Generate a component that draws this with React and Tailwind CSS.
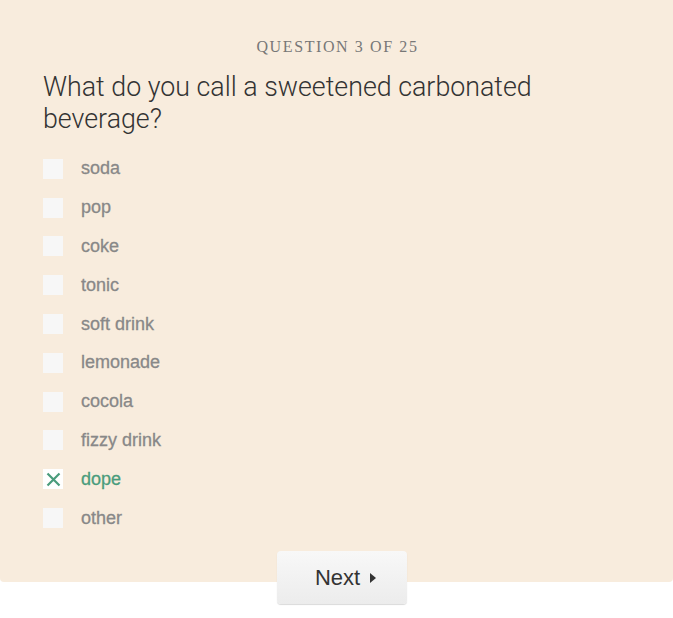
import React from "react";

const options = ["soda","pop","coke","tonic","soft drink","lemonade","cocola","fizzy drink","dope","other"];

export default function App() {
  return (
    <div className="w-[673px] bg-white min-h-[618px]">
      <div className="bg-[#f8ecdd] rounded-b-[4px] px-[43px] pt-[37px] pb-[45px]">
        <div className="text-center text-[16px] leading-[20px] tracking-[1.6px] text-[#777777] pl-[2px]" style={{fontFamily: '"Liberation Serif", serif'}}>
          QUESTION 3 OF 25
        </div>
        <h1 className="mt-[14px] text-[26.8px] leading-[32px] font-light text-[#333333] w-[520px]" style={{fontFamily: 'Roboto, sans-serif'}}>
          What do you call a sweetened carbonated beverage?
        </h1>
        <div className="mt-[14.5px] flex flex-col">
          {options.map((o) => {
            const sel = o === "dope";
            return (
              <div key={o} className="h-[38.8px] flex items-center">
                <div className={`w-[20px] h-[20px] flex items-center justify-center ${sel ? "bg-white" : "bg-[#f7f7f7]"}`}>
                  {sel && (
                    <svg width="15" height="15" viewBox="0 0 15 15">
                      <path d="M1.5 1.5 L13.5 13.5 M13.5 1.5 L1.5 13.5" stroke="#4a9c7c" strokeWidth="2.2" />
                    </svg>
                  )}
                </div>
                <span className={`ml-[18px] text-[18px] [-webkit-text-stroke:0.3px_currentColor] ${sel ? "text-[#4a9c7c]" : "text-[#888888]"}`} style={{fontFamily: '"Liberation Sans", Arial, sans-serif'}}>
                  {o}
                </span>
              </div>
            );
          })}
        </div>
      </div>
      <div className="flex justify-center pl-[10px] -mt-[31px]">
        <button className="w-[130px] h-[53px] rounded-[4px] bg-gradient-to-b from-[#f8f8f8] to-[#ececec] shadow-[0_1px_1px_rgba(0,0,0,0.15)] flex items-center justify-center gap-[10px] pl-[8px] text-[22px] text-[#333333]" style={{fontFamily: '"Liberation Sans", Arial, sans-serif'}}>
          <span>Next</span>
          <svg width="6" height="10" viewBox="0 0 6 10"><path d="M0 0 L6 5 L0 10 Z" fill="#333" /></svg>
        </button>
      </div>
    </div>
  );
}
